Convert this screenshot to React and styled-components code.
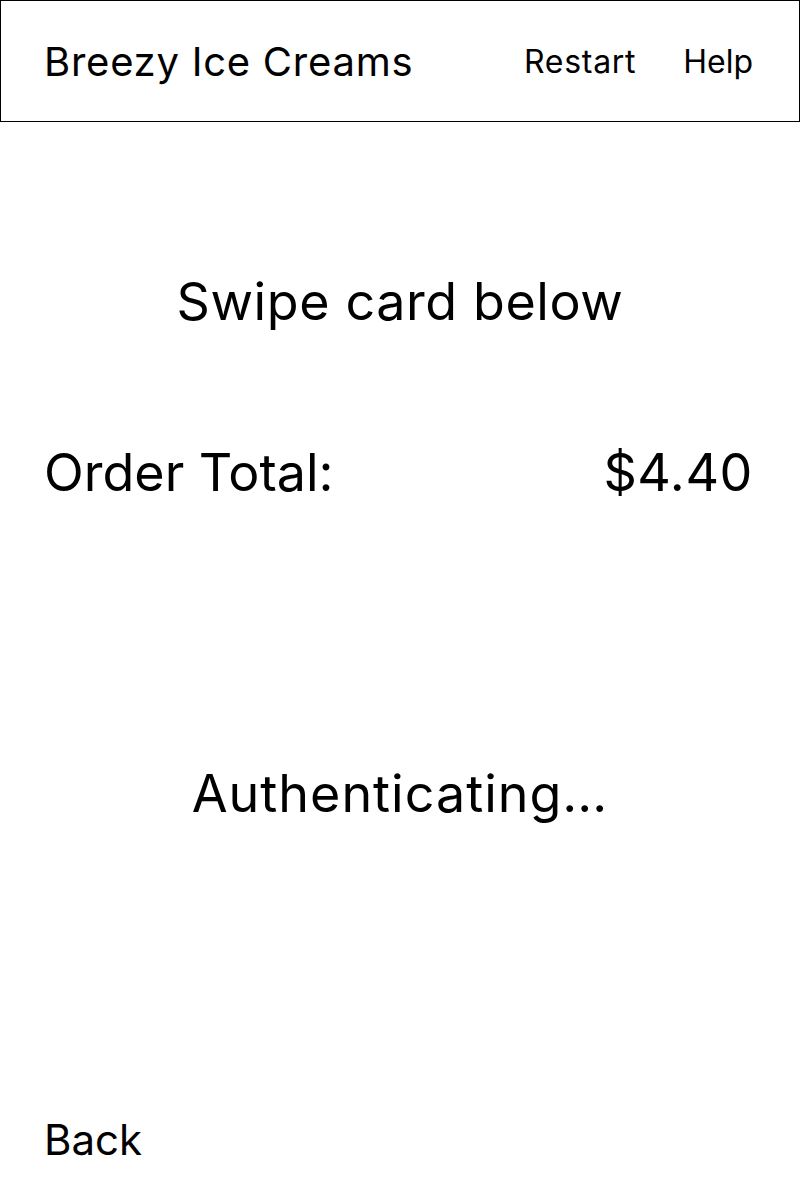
import React from "react";
import styled, { createGlobalStyle } from "styled-components";

const Global = createGlobalStyle`
  html, body { margin: 0; padding: 0; background: #fff; }
  body { font-family: Inter, "Open Sans", sans-serif; color: #000; }
`;

const Page = styled.div`
  width: 800px;
  height: 1200px;
  display: flex;
  flex-direction: column;
  box-sizing: border-box;
`;

const Header = styled.header`
  height: 122px;
  box-sizing: border-box;
  border: 1px solid #000;
  display: flex;
  align-items: center;
  justify-content: space-between;
  padding: 0 46px 0 43px;
`;

const Brand = styled.div`
  font-size: 40px;
  letter-spacing: 0.75px;
`;

const Nav = styled.nav`
  display: flex;
  gap: 47px;
`;

const NavLink = styled.span`
  font-size: 32px;
  letter-spacing: ${(p) => p.$ls || 0}px;
`;

const Main = styled.main`
  flex: 1;
  display: flex;
  flex-direction: column;
  padding: 0 47px 35px 44px;
`;

const Heading = styled.div`
  font-size: 52px;
  text-align: center;
  padding-left: 3px;
  letter-spacing: ${(p) => p.$ls || 0}px;
  margin-top: ${(p) => p.$top || 0}px;
`;

const TotalRow = styled.div`
  display: flex;
  justify-content: space-between;
  font-size: 52px;
  margin-top: 108px;
`;

const Amount = styled.span`
  letter-spacing: 0.6px;
`;

const BackLink = styled.div`
  margin-top: auto;
  font-size: 42px;
`;

export default function App() {
  return (
    <Page>
      <Global />
      <Header>
        <Brand>Breezy Ice Creams</Brand>
        <Nav>
          <NavLink $ls={0.7}>Restart</NavLink>
          <NavLink>Help</NavLink>
        </Nav>
      </Header>
      <Main>
        <Heading $top={148} $ls={0.6}>Swipe card below</Heading>
        <TotalRow>
          <span>Order Total:</span>
          <Amount>$4.40</Amount>
        </TotalRow>
        <Heading $top={258} $ls={1}>Authenticating…</Heading>
        <BackLink>Back</BackLink>
      </Main>
    </Page>
  );
}
